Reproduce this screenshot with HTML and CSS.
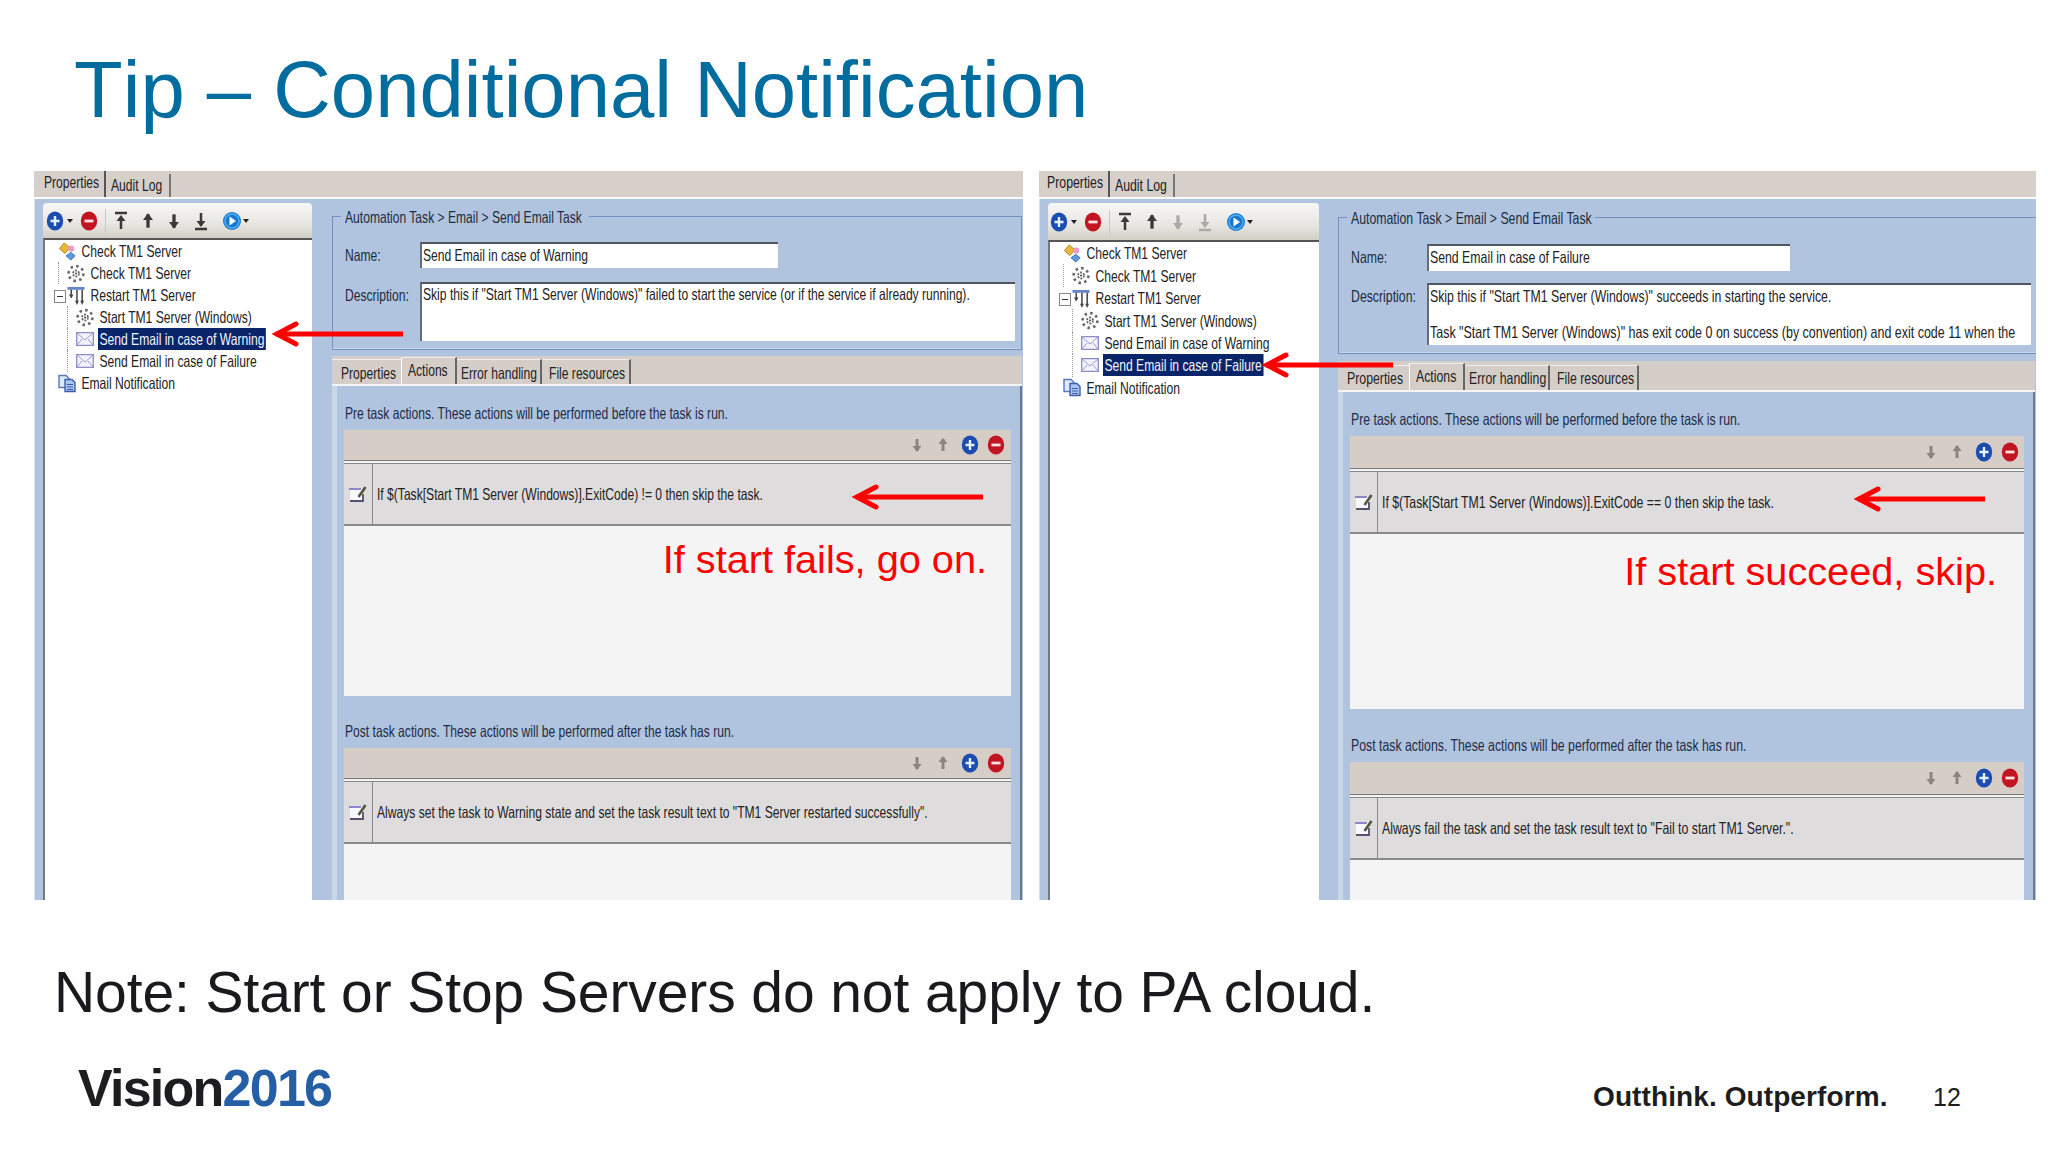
FILE: index.html
```html
<!DOCTYPE html>
<html lang="en">
<head>
  <meta charset="utf-8">
  <title>Tip – Conditional Notification</title>
  <link rel="stylesheet" href="styles.css">
</head>
<body>
  <!-- shared icons -->
  <svg class="defs" width="0" height="0">
    <symbol id="plus" viewBox="0 0 18 20">
      <ellipse cx="9" cy="10" rx="8.2" ry="9.4" fill="#1b4db0"/>
      <path d="M9 5v10M4.5 10h9" stroke="#e4f1ff" stroke-width="2.4"/>
    </symbol>
    <symbol id="minus" viewBox="0 0 18 20">
      <ellipse cx="9" cy="10" rx="8.2" ry="9.4" fill="#c11622"/>
      <path d="M4.5 10h9" stroke="#ffe4e0" stroke-width="2.8"/>
    </symbol>
    <symbol id="play" viewBox="0 0 20 20">
      <circle cx="10" cy="10" r="9" fill="#1678d2"/>
      <circle cx="10" cy="10" r="7" fill="none" stroke="#4fb0f0" stroke-width="1.5"/>
      <path d="M7.5 5.5v9l6.5-4.5z" fill="#fff"/>
    </symbol>
    <symbol id="caret" viewBox="0 0 6 4"><path d="M0 0h6l-3 4z" fill="#222"/></symbol>
    <symbol id="up" viewBox="0 0 12 18">
      <path d="M6 3v12" stroke="currentColor" stroke-width="3"/>
      <path d="M6 2l4.5 6h-9z" fill="currentColor"/>
    </symbol>
    <symbol id="down" viewBox="0 0 12 18">
      <path d="M6 3v12" stroke="currentColor" stroke-width="3"/>
      <path d="M6 16l4.5-6h-9z" fill="currentColor"/>
    </symbol>
    <symbol id="top" viewBox="0 0 14 20">
      <path d="M1 2h12M7 6v12" stroke="currentColor" stroke-width="2.5"/>
      <path d="M7 4l4.5 6h-9z" fill="currentColor"/>
    </symbol>
    <symbol id="bottom" viewBox="0 0 14 20">
      <path d="M1 18h12M7 2v12" stroke="currentColor" stroke-width="2.5"/>
      <path d="M7 16l4.5-6h-9z" fill="currentColor"/>
    </symbol>
    <symbol id="job" viewBox="0 0 18 20">
      <path d="M6 1l6 5-5 6-6-5z" fill="#e9b83c" stroke="#b58724"/>
      <circle cx="13.5" cy="7" r="3.2" fill="#ea9cc4"/>
      <path d="M8 14.500l5-3.500 4.500 3.500-4.500 4.500z" fill="#5b9be0" stroke="#3c70b4"/>
    </symbol>
    <symbol id="gear" viewBox="0 0 18 18">
      <circle cx="9" cy="9" r="7.4" fill="none" stroke="#666" stroke-width="2.6" stroke-dasharray="2.500 3.300"/>
      <circle cx="9" cy="9" r="3" fill="none" stroke="#666" stroke-width="1.8" stroke-dasharray="2 1.2"/>
      <circle cx="9" cy="9" r="1" fill="#444"/>
    </symbol>
    <symbol id="steps" viewBox="0 0 18 20">
      <path d="M0 1h18v3H0z" fill="#6585c8"/>
      <path d="M4 4v8M10 4v13M15.5 4v13" stroke="#444" stroke-width="1.6"/>
      <path d="M1.5 9h5L4 13zM8 15.5h4L10 20zM13.5 15.5h4l-2 4.5z" fill="#444"/>
    </symbol>
    <symbol id="mail" viewBox="0 0 18 14">
      <path d="M.7.7h16.600v12.600H.7z" fill="#f3f3fd" stroke="#8c8cc8" stroke-width="1.3"/>
      <path d="M1 1l8 7 8-7M1 13l5-6M17 13l-5-6" fill="none" stroke="#9a9ace"/>
    </symbol>
    <symbol id="pages" viewBox="0 0 18 18">
      <path d="M1 1h7l3 3v9H1z" fill="#dfe9fb" stroke="#5878bc" stroke-width="1.4"/>
      <path d="M7 5h7l3 3v9H7z" fill="#a9c4f0" stroke="#3d5ea8" stroke-width="1.4"/>
      <path d="M9 10h6M9 12.5h6M9 15h6" stroke="#3d5ea8"/>
    </symbol>
    <symbol id="edit" viewBox="0 0 20 18">
      <path d="M2 3h12v12H2z" fill="#f8f8ff"/>
      <path d="M1 3.5h12" stroke="#8c86cc" stroke-width="2"/>
      <path d="M2 15.5h13v-7" fill="none" stroke="#56506e" stroke-width="1.8"/>
      <path d="M17.5 1.5l-7 10" stroke="#55553c" stroke-width="2.6"/>
    </symbol>
    <symbol id="arrow" viewBox="0 0 131 26">
      <path d="M4 13h127" stroke="#f00" stroke-width="5"/>
      <path d="M24 3L5 13l19 10" fill="none" stroke="#f00" stroke-width="5" stroke-linecap="round"/>
    </symbol>
  </svg>

  <div class="slide">
    <h1>Tip – Conditional Notification</h1>

    <div class="shots">
      <div class="shot warning">
        <div class="tabs"><div class="tab-props"><span>Properties</span></div><div class="tab-audit"><span>Audit Log</span></div></div>
        <div class="panes">
          <div class="side">
            <div class="toolbar">
              <svg class="ic round"><use href="#plus"/></svg><svg class="caret"><use href="#caret"/></svg>
              <svg class="ic round second"><use href="#minus"/></svg><i class="sep"></i>
              <svg class="ic"><use href="#top"/></svg><svg class="ic"><use href="#up"/></svg>
              <svg class="ic"><use href="#down"/></svg><svg class="ic"><use href="#bottom"/></svg>
              <svg class="ic go"><use href="#play"/></svg><svg class="caret"><use href="#caret"/></svg>
            </div>
            <div class="tree">
              <div class="node l0"><svg><use href="#job"/></svg><span>Check TM1 Server</span></div>
              <div class="node l1"><svg><use href="#gear"/></svg><span>Check TM1 Server</span></div>
              <div class="node l1 open"><svg><use href="#steps"/></svg><span>Restart TM1 Server</span></div>
              <div class="node l2"><svg><use href="#gear"/></svg><span>Start TM1 Server (Windows)</span></div>
              <div class="node l2 mail selected"><svg><use href="#mail"/></svg><span>Send Email in case of Warning</span></div>
              <div class="node l2 mail"><svg><use href="#mail"/></svg><span>Send Email in case of Failure</span></div>
              <div class="node l0"><svg><use href="#pages"/></svg><span>Email Notification</span></div>
            </div>
          </div>
          <div class="main">
            <fieldset>
              <legend><span>Automation Task &gt; Email &gt; Send Email Task</span></legend>
              <div class="field"><label><span>Name:</span></label><div class="input name"><span>Send Email in case of Warning</span></div></div>
              <div class="field"><label><span>Description:</span></label><div class="input desc"><p><span>Skip this if "Start TM1 Server (Windows)" failed to start the service (or if the service if already running).</span></p></div></div>
            </fieldset>
            <div class="subtabs"><div class="t1"><span>Properties</span></div><div class="t2"><span>Actions</span></div><div class="t3"><span>Error handling</span></div><div class="t4"><span>File resources</span></div></div>
            <div class="pane">
              <p class="caption"><span>Pre task actions. These actions will be performed before the task is run.</span></p>
              <div class="list pre">
                <div class="bar"><svg class="gray"><use href="#down"/></svg><svg class="gray"><use href="#up"/></svg><svg><use href="#plus"/></svg><svg><use href="#minus"/></svg></div>
                <div class="row"><div class="cell"><svg><use href="#edit"/></svg></div><span>If $(Task[Start TM1 Server (Windows)].ExitCode) != 0 then skip the task.</span></div>
              </div>
              <p class="caption post"><span>Post task actions. These actions will be performed after the task has run.</span></p>
              <div class="list last">
                <div class="bar"><svg class="gray"><use href="#down"/></svg><svg class="gray"><use href="#up"/></svg><svg><use href="#plus"/></svg><svg><use href="#minus"/></svg></div>
                <div class="row"><div class="cell"><svg><use href="#edit"/></svg></div><span>Always set the task to Warning state and set the task result text to "TM1 Server restarted successfully".</span></div>
              </div>
            </div>
          </div>
        </div>
        <svg class="arrow tree-arrow"><use href="#arrow"/></svg>
        <svg class="arrow row-arrow"><use href="#arrow"/></svg>
        <p class="callout">If start fails, go on.</p>
      </div>

      <div class="shot failure">
        <div class="tabs"><div class="tab-props"><span>Properties</span></div><div class="tab-audit"><span>Audit Log</span></div></div>
        <div class="panes">
          <div class="side">
            <div class="toolbar">
              <svg class="ic round"><use href="#plus"/></svg><svg class="caret"><use href="#caret"/></svg>
              <svg class="ic round second"><use href="#minus"/></svg><i class="sep"></i>
              <svg class="ic"><use href="#top"/></svg><svg class="ic"><use href="#up"/></svg>
              <svg class="ic off"><use href="#down"/></svg><svg class="ic off"><use href="#bottom"/></svg>
              <svg class="ic go"><use href="#play"/></svg><svg class="caret"><use href="#caret"/></svg>
            </div>
            <div class="tree">
              <div class="node l0"><svg><use href="#job"/></svg><span>Check TM1 Server</span></div>
              <div class="node l1"><svg><use href="#gear"/></svg><span>Check TM1 Server</span></div>
              <div class="node l1 open"><svg><use href="#steps"/></svg><span>Restart TM1 Server</span></div>
              <div class="node l2"><svg><use href="#gear"/></svg><span>Start TM1 Server (Windows)</span></div>
              <div class="node l2 mail"><svg><use href="#mail"/></svg><span>Send Email in case of Warning</span></div>
              <div class="node l2 mail selected"><svg><use href="#mail"/></svg><span>Send Email in case of Failure</span></div>
              <div class="node l0"><svg><use href="#pages"/></svg><span>Email Notification</span></div>
            </div>
          </div>
          <div class="main">
            <fieldset>
              <legend><span>Automation Task &gt; Email &gt; Send Email Task</span></legend>
              <div class="field"><label><span>Name:</span></label><div class="input name"><span>Send Email in case of Failure</span></div></div>
              <div class="field"><label><span>Description:</span></label><div class="input desc"><p><span>Skip this if "Start TM1 Server (Windows)" succeeds in starting the service.</span></p><p class="second-line"><span>Task "Start TM1 Server (Windows)" has exit code 0 on success (by convention) and exit code 11 when the</span></p></div></div>
            </fieldset>
            <div class="subtabs"><div class="t1"><span>Properties</span></div><div class="t2"><span>Actions</span></div><div class="t3"><span>Error handling</span></div><div class="t4"><span>File resources</span></div></div>
            <div class="pane">
              <p class="caption"><span>Pre task actions. These actions will be performed before the task is run.</span></p>
              <div class="list pre">
                <div class="bar"><svg class="gray"><use href="#down"/></svg><svg class="gray"><use href="#up"/></svg><svg><use href="#plus"/></svg><svg><use href="#minus"/></svg></div>
                <div class="row"><div class="cell"><svg><use href="#edit"/></svg></div><span>If $(Task[Start TM1 Server (Windows)].ExitCode == 0 then skip the task.</span></div>
              </div>
              <p class="caption post"><span>Post task actions. These actions will be performed after the task has run.</span></p>
              <div class="list last">
                <div class="bar"><svg class="gray"><use href="#down"/></svg><svg class="gray"><use href="#up"/></svg><svg><use href="#plus"/></svg><svg><use href="#minus"/></svg></div>
                <div class="row"><div class="cell"><svg><use href="#edit"/></svg></div><span>Always fail the task and set the task result text to "Fail to start TM1 Server.".</span></div>
              </div>
            </div>
          </div>
        </div>
        <svg class="arrow tree-arrow"><use href="#arrow"/></svg>
        <svg class="arrow row-arrow"><use href="#arrow"/></svg>
        <p class="callout">If start succeed, skip.</p>
      </div>
    </div>

    <p class="note">Note: Start or Stop Servers do not apply to PA cloud.</p>

    <footer>
      <div class="logo">Vision<span>2016</span></div>
      <div class="tagline">Outthink. Outperform.</div>
      <div class="page">12</div>
    </footer>
  </div>
</body>
</html>
```

FILE: styles.css
```css
* {
  box-sizing: border-box;
}
body {
  margin: 0;
  background: #fefefe;
  font-family: "Liberation Sans", Arial, sans-serif;
}
p, h1 {
  margin: 0;
  font-weight: normal;
}
.defs {
  position: absolute;
}
.slide {
  width: 2048px;
  height: 1152px;
  display: flex;
  flex-direction: column;
  overflow: hidden;
}
h1 {
  height: 171px;
  padding: 44px 0 0 74px;
  font-size: 79.7px;
  line-height: 91px;
  font-kerning: none;
  color: #006d9e;
  white-space: nowrap;
}

/* screenshots */
.shots {
  display: flex;
  gap: 16px;
  padding-left: 34px;
  height: 729px;
}
.shot {
  --side: 279px;
  --tool: 35px;
  --node: 22.05px;
  --squeeze: .733;
  width: 989px;
  height: 729px;
  display: flex;
  flex-direction: column;
  position: relative;
  overflow: hidden;
  background: #b0c4df;
  color: #222;
  font-size: 16.5px;
  line-height: 20px;
  white-space: nowrap;
}
.failure {
  --side: 281px;
  --tool: 37px;
  --node: 22.45px;
  --squeeze: .745;
  width: 997px;
}
/* narrow dialog lettering */
.shot span {
  display: inline-block;
  transform: scaleX(var(--squeeze));
  transform-origin: left;
}
.tabs {
  height: 28px;
  display: flex;
  background: #d6cfca;
  border-bottom: 2px solid #fbfbfb;
}
.tab-props {
  width: 72px;
  padding: 1px 0 0 10px;
  border-right: 2px solid #555;
}
.tab-audit {
  width: 65px;
  margin-top: 3px;
  padding: 1px 0 0 5px;
  border-right: 2px solid #777;
}
.failure .tab-props {
  width: 71px;
  padding-left: 8px;
}
.panes {
  flex: 1;
  display: flex;
}

/* left side */
.side {
  width: var(--side);
  flex: none;
  padding: 4px 1px 0 8px;
  display: flex;
  flex-direction: column;
  border-left: 1px solid #d8dfe8;
}
.toolbar {
  height: var(--tool);
  display: flex;
  align-items: center;
  padding-left: 3px;
  background: linear-gradient(#f7f7f5, #e8e6e1 60%, #d2cfc6);
  border-radius: 4px 4px 0 0;
}
.ic {
  width: 18px;
  height: 20px;
  margin-right: 8.6px;
  color: #3a3a3a;
}
.off {
  color: #aaa;
}
.round {
  margin-right: 3px;
}
.caret {
  width: 6px;
  height: 4px;
}
.second {
  margin-left: 7px;
  margin-right: 7px;
}
.sep {
  width: 1px;
  height: 24px;
  margin-right: 6px;
  background: #c9c7c1;
}
.go {
  width: 20px;
  margin: 0 1px 0 4px;
}
.failure .toolbar {
  padding-left: 2px;
}
.tree {
  flex: 1;
  background: #fff;
  border-top: 2px solid #555;
  border-left: 2px solid #777;
}
.node {
  height: var(--node);
  display: flex;
  align-items: center;
  position: relative;
  padding-left: 13px;
}
.node svg {
  width: 18px;
  height: 19px;
  margin-right: 4px;
  flex: none;
}
.node span {
  height: 22px;
  line-height: 22px;
  padding: 0 2px;
}
.l1 {
  padding-left: 22px;
}
.l2 {
  padding-left: 31px;
}
.l1::before, .l2::before {
  content: "";
  position: absolute;
  left: 13px;
  top: 0;
  height: 100%;
  border-left: 1px dotted #999;
}
.l2::before {
  left: 22px;
}
.open::before {
  left: 9px;
  top: 6px;
  width: 10px;
  height: 11px;
  border: 1px solid #888;
  background: linear-gradient(#333, #333) center / 6px 1px no-repeat #fff;
}
.node.mail svg {
  height: 14px;
}
.selected span {
  background: #0a246a;
  color: #f2f4fb;
}

/* right side */
.main {
  flex: 1;
  min-width: 0;
  padding: 7px 0 0 19px;
  display: flex;
  flex-direction: column;
}
fieldset {
  height: 144px;
  margin: 0 1px 0 0;
  padding: 16px 6px 0 12px;
  border: 1px solid #7391bf;
  box-shadow: inset 0 -1px 0 #c6d6ee;
  color: #222c40;
  min-width: 0;
}
legend {
  width: 248px;
  height: 20px;
  margin-left: -4px;
  padding: 0 4px;
  line-height: 23px;
}
.field {
  display: flex;
  margin-bottom: 13px;
}
label {
  width: 75px;
  flex: none;
  line-height: 27px;
}
.input {
  background: #fff;
  border-top: 2px solid #50565f;
  border-left: 2px solid #666c75;
  padding-left: 1px;
  color: #222;
}
.name {
  width: 358px;
  height: 26px;
  line-height: 23px;
}
.desc {
  flex: 1;
  min-width: 0;
  height: 59px;
  overflow: hidden;
}
.subtabs {
  height: 30px;
  margin: 6px 1px 0 0;
  display: flex;
  align-items: flex-end;
  background: #d5cec8;
  border-bottom: 2px solid #f4f6f6;
}
.subtabs div {
  height: 25px;
  line-height: 26px;
  border-top: 1px solid #f0eeea;
  border-right: 2px solid #666;
}
.subtabs .t1 {
  width: 69px;
  padding-left: 9px;
  border-right: 0;
}
.subtabs .t2 {
  width: 56px;
  height: 27px;
  line-height: 24px;
  padding-left: 6px;
  border-left: 1px solid #fff;
}
.subtabs .t3 {
  width: 85px;
  padding-left: 4px;
}
.subtabs .t4 {
  width: 89px;
  padding-left: 7px;
}
.pane {
  flex: 1;
  display: flex;
  flex-direction: column;
  padding: 0 9px 0 7px;
  margin-right: 1px;
  border-left: 5px solid #cad7e4;
  border-right: 2px solid #6d7787;
}
.caption {
  height: 44px;
  padding: 17px 0 0 1px;
  color: #1f2b45;
}
.post {
  height: 52px;
  padding-top: 25px;
}
.list {
  background: #f5f4f5;
  height: 266px;
}
.last {
  height: auto;
  flex: 1;
}
.bar {
  height: 31px;
  display: flex;
  justify-content: flex-end;
  align-items: center;
  gap: 8.5px;
  padding-right: 6px;
  background: #d6cec6;
  border-bottom: 1px solid #777;
}
.bar svg {
  width: 18px;
  height: 20px;
}
.bar .gray {
  height: 18px;
  color: #8a867f;
}
.row {
  height: 63px;
  margin-top: 2px;
  display: flex;
  align-items: center;
  background: #dedcdc;
  border-top: 1px solid #888;
  border-bottom: 2px solid #8a8a8c;
}
.cell {
  width: 29px;
  flex: none;
  height: 100%;
  margin-right: 4px;
  display: flex;
  align-items: center;
  padding-left: 4px;
  border-right: 1px solid #888;
}
.cell svg {
  width: 20px;
  height: 19px;
}

/* second shot is scaled up slightly */
.failure .main {
  padding: 8px 0 0 18px;
}
.failure .node span {
  transform: scaleX(.733);
}
.failure fieldset {
  height: 147px;
  padding: 17px 5px 0 12px;
  margin-right: 0;
  border-right: 0;
}
.failure .field {
  margin-bottom: 12px;
}
.failure label {
  width: 76px;
}
.failure .name {
  width: 363px;
  height: 27px;
}
.failure .desc {
  height: 62px;
}
.failure .desc p {
  padding-top: 1px;
}
.failure .second-line {
  margin-top: 15px;
}
.failure .second-line span {
  transform: scaleX(.756);
}
.failure .subtabs {
  height: 31px;
  margin-top: 7px;
}
.failure .subtabs div {
  line-height: 25px;
}
.failure .caption {
  height: 44px;
}
.failure .post {
  height: 53px;
  padding-top: 26px;
}
.failure .list {
  height: 273px;
}
.failure .last {
  height: auto;
}
.failure .bar {
  height: 33px;
  padding-right: 5px;
}
.failure .cell {
  width: 28px;
}
.failure .subtabs .t1 {
  width: 71px;
}

/* red annotations lie over the shots */
.arrow {
  position: absolute;
  width: 131px;
  height: 26px;
}
.warning .tree-arrow {
  left: 238px;
  top: 150px;
}
.warning .row-arrow {
  left: 818px;
  top: 313px;
}
.failure .tree-arrow {
  left: 223px;
  top: 181px;
}
.failure .row-arrow {
  left: 815px;
  top: 315px;
}
.callout {
  position: absolute;
  right: 36px;
  top: 365px;
  font-size: 39.7px;
  line-height: 46px;
  color: #f00;
}
.failure .callout {
  right: 39px;
  top: 377px;
}

/* bottom */
.note {
  padding: 59px 0 0 54px;
  font-size: 57px;
  line-height: 66px;
  letter-spacing: -0.1px;
  color: #1a1a1e;
  white-space: nowrap;
}
footer {
  margin-top: 33px;
  display: flex;
  align-items: baseline;
  padding-left: 78px;
  color: #1d1d20;
}
.logo {
  width: 1515px;
  font-size: 52px;
  line-height: 60px;
  font-weight: bold;
  letter-spacing: -1.75px;
}
.logo span {
  color: #265ea6;
}
.tagline {
  width: 340px;
  font-size: 28px;
  font-weight: bold;
  letter-spacing: 0.1px;
}
.page {
  font-size: 25px;
}
```
